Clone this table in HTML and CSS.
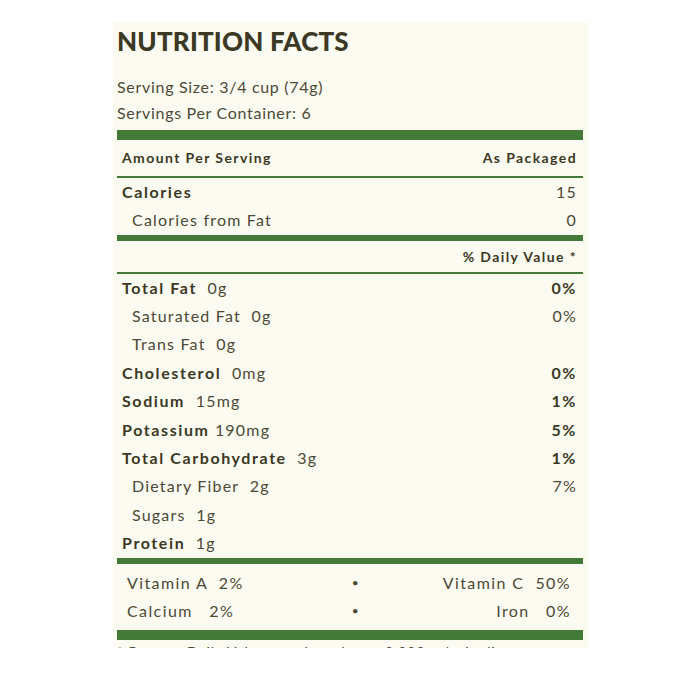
FILE: index.html
```html
<!DOCTYPE html>
<html lang="en">
<head>
<meta charset="utf-8">
<title>Nutrition Facts</title>
<link rel="stylesheet" href="styles.css">
</head>
<body>
<section class="label">
  <h1 class="title">NUTRITION FACTS</h1>
  <p class="serving">Serving Size: 3/4 cup (74g)</p>
  <p class="serving">Servings Per Container: 6</p>
  <div class="bar bar-thick bar-top"></div>
  <div class="row head"><span>Amount Per Serving</span><span>As Packaged</span></div>
  <div class="rule"></div>
  <div class="row cal"><span class="b">Calories</span><span>15</span></div>
  <div class="row sub cal"><span>Calories from Fat</span><span>0</span></div>
  <div class="bar bar-mid"></div>
  <div class="row head head-dv"><span></span><span>% Daily Value *</span></div>
  <div class="rule"></div>
  <div class="list">
    <div class="row"><span><b>Total Fat</b>&nbsp; 0g</span><b>0%</b></div>
    <div class="row sub"><span>Saturated Fat&nbsp; 0g</span><span>0%</span></div>
    <div class="row sub"><span>Trans Fat&nbsp; 0g</span><span></span></div>
    <div class="row"><span><b>Cholesterol</b>&nbsp; 0mg</span><b>0%</b></div>
    <div class="row"><span><b>Sodium</b>&nbsp; 15mg</span><b>1%</b></div>
    <div class="row"><span><b>Potassium</b> 190mg</span><b>5%</b></div>
    <div class="row"><span><b>Total Carbohydrate</b>&nbsp; 3g</span><b>1%</b></div>
    <div class="row sub"><span>Dietary Fiber&nbsp; 2g</span><span>7%</span></div>
    <div class="row sub"><span>Sugars&nbsp; 1g</span><span></span></div>
    <div class="row"><span><b>Protein</b>&nbsp; 1g</span><span></span></div>
  </div>
  <div class="bar bar-mid"></div>
  <div class="vitamins">
    <div class="vrow"><span>Vitamin A&nbsp; 2%</span><span class="dot">•</span><span class="vr">Vitamin C&nbsp; 50%</span></div>
    <div class="vrow"><span>Calcium&nbsp;&nbsp; 2%</span><span class="dot">•</span><span class="vr">Iron&nbsp;&nbsp; 0%</span></div>
  </div>
  <div class="bar bar-thick"></div>
  <p class="foot">* Percent Daily Values are based on a 2,000 calorie diet.</p>
</section>
</body>
</html>
```
FILE: styles.css
```css
html, body {
  margin: 0;
  padding: 0;
  background: #ffffff;
}
body {
  padding: 22px 0 0 113px;
  font-family: "Lato", "Noto Sans", sans-serif;
  color: #4d4936;
}
.label {
  width: 466px;
  height: 626px;
  overflow: hidden;
  background: #fcfbf1;
  padding: 0 6px 0 4px;
}
.title {
  margin: 0;
  padding-top: 4px;
  height: 36px;
  line-height: 30px;
  font-size: 26px;
  font-weight: 900;
  color: #3b3824;
  letter-spacing: 0.2px;
}
.serving {
  margin: 0;
  font-size: 16px;
  font-weight: 400;
  line-height: 26px;
  letter-spacing: 0.7px;
}
.serving:first-of-type { margin-top: 12px; }
.bar { background: #437a38; }
.bar-thick { height: 10px; }
.bar-top { margin-top: 4px; }
.bar-mid { height: 6px; }
.rule { height: 2px; background: #437a38; }
.row {
  box-sizing: border-box;
  display: flex;
  justify-content: space-between;
  align-items: center;
  height: 28px;
  padding: 0 6px 2px 5px;
  font-size: 16px;
  font-weight: 400;
  letter-spacing: 1.2px;
}
.row.cal { height: 28.5px; }
.row b, .b { font-weight: 700; color: #3b3824; letter-spacing: 1.6px; }
.row.sub { padding-left: 15px; }
.row.head {
  height: 36px;
  padding-bottom: 1px;
  font-size: 14px;
  font-weight: 700;
  color: #3b3824;
  letter-spacing: 1.4px;
}
.row.head-dv { height: 31px; }
.list .row { height: 28.4px; }
.vitamins { padding: 5px 12px 5px 10px; }
.vrow {
  display: grid;
  grid-template-columns: 1fr auto 1fr;
  height: 28px;
  align-items: center;
  font-size: 16px;
  font-weight: 400;
  letter-spacing: 1.4px;
}
.dot { font-size: 12px; padding-left: 14px; }
.vr { text-align: right; }
.foot {
  margin: 2px 0 0 0;
  font-size: 14px;
  font-weight: 400;
  line-height: 20px;
  letter-spacing: 1px;
  white-space: nowrap;
}
```
